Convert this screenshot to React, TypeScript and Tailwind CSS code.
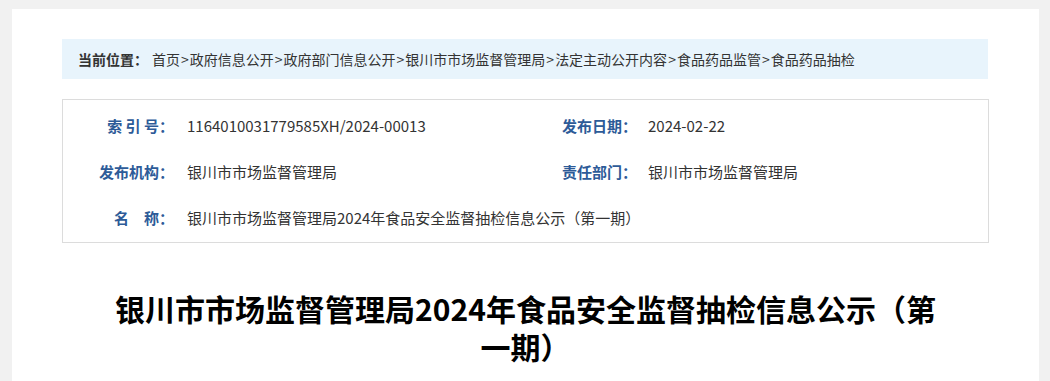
import { Fragment } from 'react';

const crumbs = [
  '首页',
  '政府信息公开',
  '政府部门信息公开',
  '银川市市场监督管理局',
  '法定主动公开内容',
  '食品药品监管',
  '食品药品抽检'
];

function Label({ text, className = '' }: { text: string; className?: string }) {
  return (
    <span className={`font-bold text-[#2d5b98] whitespace-pre ${className}`}>
      {text}
    </span>
  );
}

export default function App() {
  return (
    <div className="min-h-screen bg-[#f1f1f1] pt-[9px] font-['Microsoft_YaHei','Noto_Sans_CJK_SC',sans-serif] text-[#333]">
      <div className="ml-[12px] w-[1027px] h-[400px] bg-white px-[50px] pt-[30px]">
        {/* breadcrumb */}
        <div className="w-[926px] h-[40px] bg-[#e8f4fc] flex items-center pl-[16px] text-[14px]">
          <span className="font-bold">当前位置：</span>
          <span className="ml-[4px]">
            {crumbs.map((c, i) => (
              <Fragment key={c}>
                {i > 0 && <span className="mx-[1px]">&gt;</span>}
                {c}
              </Fragment>
            ))}
          </span>
        </div>

        {/* meta info */}
        <div className="mt-[20px] w-[927px] border border-[#dcdcdc] pt-[3px] pb-[1px] text-[15px]">
          <div className="flex h-[46px] items-center">
            <div className="flex w-[499px] items-center">
              <Label text="索 引 号：" className="w-[111px] text-right" />
              <span className="ml-[13px]">1164010031779585XH/2024-00013</span>
            </div>
            <Label text="发布日期：" />
            <span className="ml-[11px]">2024-02-22</span>
          </div>
          <div className="flex h-[46px] items-center">
            <div className="flex w-[499px] items-center">
              <Label text="发布机构：" className="w-[111px] text-right" />
              <span className="ml-[13px]">银川市市场监督管理局</span>
            </div>
            <Label text="责任部门：" />
            <span className="ml-[11px]">银川市市场监督管理局</span>
          </div>
          <div className="flex h-[46px] items-center">
            <Label text="名　称：" className="w-[111px] text-right" />
            <span className="ml-[13px]">银川市市场监督管理局2024年食品安全监督抽检信息公示（第一期）</span>
          </div>
        </div>

        {/* title */}
        <h1 className="mt-[46px] mx-auto w-[840px] text-center text-[30px] leading-[38px] font-bold text-black">
          银川市市场监督管理局2024年食品安全监督抽检信息公示（第一期）
        </h1>
      </div>
    </div>
  );
}
